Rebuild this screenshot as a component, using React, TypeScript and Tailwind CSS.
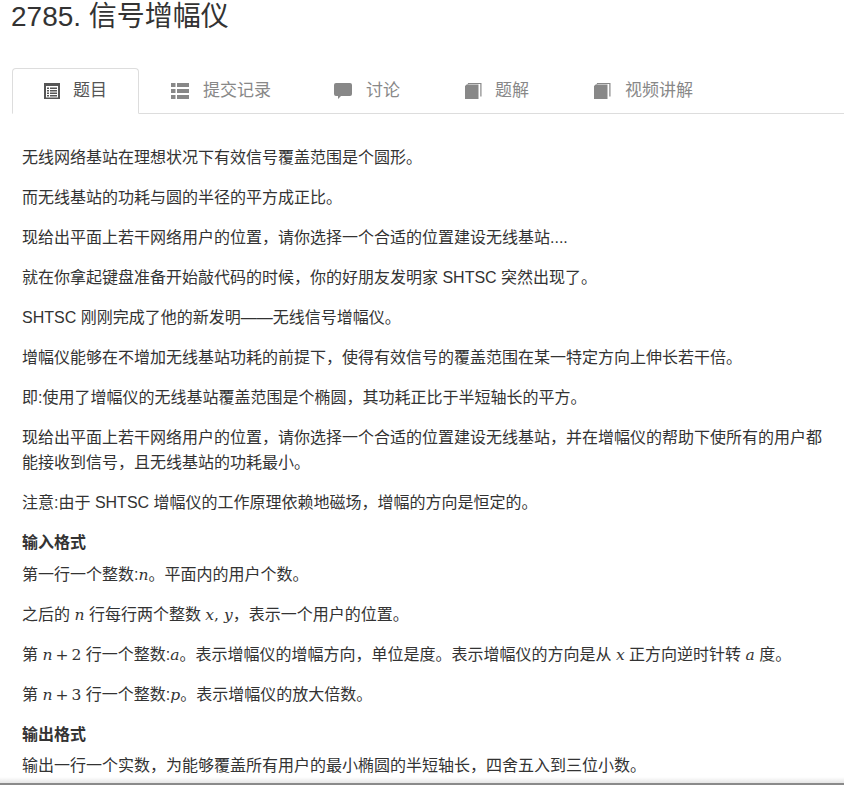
import React from "react";

const M = ({ children }: { children: React.ReactNode }) => (
  <span className="font-['DejaVu_Serif',serif] text-[15.5px] leading-none">{children}</span>
);
const I = ({ children }: { children: React.ReactNode }) => <i className="italic">{children}</i>;
const Plus = () => <span className="mx-[3px]">+</span>;

const ListAlt = () => (
  <svg width="16" height="16" viewBox="0 0 16 16" className="shrink-0">
    <path fillRule="evenodd" fill="currentColor" d="M0 0h16v16H0zM2 3v11.5h12V3z" />
    <path fill="currentColor" d="M3 4.5h2V6H3zM6 4.5h7V6H6zM3 7h2v1.5H3zM6 7h7v1.5H6zM3 9.5h2V11H3zM6 9.5h7V11H6zM3 12h2v1.5H3zM6 12h7v1.5H6z" />
  </svg>
);
const ThList = () => (
  <svg width="18" height="16" viewBox="0 0 18 16" className="shrink-0">
    <path fill="currentColor" d="M0 0h4.5v4H0zM6 0h12v4H6zM0 6h4.5v4H0zM6 6h12v4H6zM0 12h4.5v4H0zM6 12h12v4H6z" />
  </svg>
);
const Comment = () => (
  <svg width="18" height="16" viewBox="0 0 18 16" className="shrink-0">
    <path fill="currentColor" d="M2 0h14a2 2 0 0 1 2 2v9a2 2 0 0 1-2 2H7l-3 3v-3H2a2 2 0 0 1-2-2V2a2 2 0 0 1 2-2z" />
  </svg>
);
const Book = () => (
  <svg width="17" height="16" viewBox="0 0 17 16" className="shrink-0">
    <path fill="currentColor" d="M3 0h13.5v13.5h-1.2V1H3.8L2.5 2.2z" />
    <path fill="currentColor" d="M0 3l1.6-1.5h11.9V16H0z" />
  </svg>
);

const Tab = ({ icon, label, active, gap, cls = "" }: { icon: React.ReactNode; label: string; active?: boolean; gap: string; cls?: string }) => (
  <div
    className={
      (active
        ? "flex items-center h-[46px] -mb-px px-[31px] border border-[#ddd] border-b-white bg-white rounded-t-[4px] text-[#555] "
        : "flex items-center h-[46px] -mb-px px-[31px] border border-transparent text-[#888] ") + cls
    }
  >
    {icon}
    <span className={gap}>{label}</span>
  </div>
);

const P = ({ children }: { children: React.ReactNode }) => <p className="mb-[14.4px]">{children}</p>;
const H = ({ children }: { children: React.ReactNode }) => <h3 className="font-bold mb-[5.6px]">{children}</h3>;

export default function App() {
  return (
    <div className="relative h-[785px] w-[844px] overflow-hidden bg-white text-[#333] font-['Liberation_Sans','Noto_Sans_CJK_SC',sans-serif]">
      <h1 className="pl-[11px] text-[28px] leading-[33px] font-normal">2785. 信号增幅仪</h1>
      <div className="mt-[35px] ml-3 flex h-[46px] border-b border-[#ddd] text-[17px]">
        <Tab active icon={<ListAlt />} label="题目" gap="ml-[13px]" />
        <Tab icon={<ThList />} label="提交记录" gap="ml-[14px]" />
        <Tab icon={<Comment />} label="讨论" gap="ml-[14px]" cls="-ml-px" />
        <Tab icon={<Book />} label="题解" gap="ml-[13px]" cls="ml-px" />
        <Tab icon={<Book />} label="视频讲解" gap="ml-[14px]" cls="ml-px" />
      </div>
      <div className="pl-[22px] pr-[10px] pt-[31px] text-[16px] leading-[25.6px]">
        <P>无线网络基站在理想状况下有效信号覆盖范围是个圆形。</P>
        <P>而无线基站的功耗与圆的半径的平方成正比。</P>
        <P>现给出平面上若干网络用户的位置，请你选择一个合适的位置建设无线基站....</P>
        <P>就在你拿起键盘准备开始敲代码的时候，你的好朋友发明家 SHTSC 突然出现了。</P>
        <P>SHTSC 刚刚完成了他的新发明——无线信号增幅仪。</P>
        <P>增幅仪能够在不增加无线基站功耗的前提下，使得有效信号的覆盖范围在某一特定方向上伸长若干倍。</P>
        <P>即:使用了增幅仪的无线基站覆盖范围是个椭圆，其功耗正比于半短轴长的平方。</P>
        <P>现给出平面上若干网络用户的位置，请你选择一个合适的位置建设无线基站，并在增幅仪的帮助下使所有的用户都能接收到信号，且无线基站的功耗最小。</P>
        <P>注意:由于 SHTSC 增幅仪的工作原理依赖地磁场，增幅的方向是恒定的。</P>
        <H>输入格式</H>
        <P>第一行一个整数:<M><I>n</I></M>。平面内的用户个数。</P>
        <P>之后的 <M><I>n</I></M> 行每行两个整数 <M><I>x</I>, <I>y</I></M>，表示一个用户的位置。</P>
        <P>第 <M><I>n</I><Plus />2</M> 行一个整数:<M><I>a</I></M>。表示增幅仪的增幅方向，单位是度。表示增幅仪的方向是从 <M><I>x</I></M> 正方向逆时针转 <M><I>a</I></M> 度。</P>
        <P>第 <M><I>n</I><Plus />3</M> 行一个整数:<M><I>p</I></M>。表示增幅仪的放大倍数。</P>
        <H>输出格式</H>
        <P>输出一行一个实数，为能够覆盖所有用户的最小椭圆的半短轴长，四舍五入到三位小数。</P>
      </div>
      <div className="absolute bottom-[2px] left-0 right-0 h-[6px] bg-gradient-to-b from-transparent to-black/10" />
      <div className="absolute bottom-0 left-0 right-0 h-[2px] bg-[#8a8a8a]" />
    </div>
  );
}
